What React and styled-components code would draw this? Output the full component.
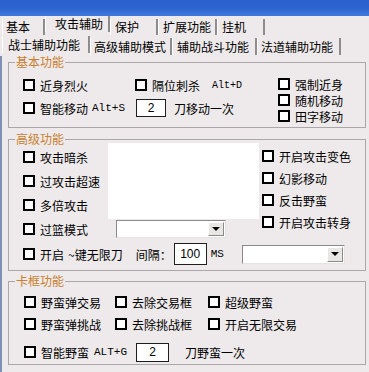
import React from "react";
import styled, { createGlobalStyle } from "styled-components";

const GlobalStyle = createGlobalStyle`
  html, body {
    margin: 0;
    padding: 0;
    background: #eeeaeb;
  }
  body {
    font-family: "Noto Sans CJK SC", "Noto Sans", sans-serif;
    font-size: 12px;
    color: #000;
  }
`;

const Window = styled.div`
  display: flex;
  flex-direction: column;
  width: 369px;
  height: 372px;
  overflow: hidden;
  background: #eeeaeb;
`;

const TitleBar = styled.header`
  flex: none;
  height: 16px;
  background: #2d63cf linear-gradient(180deg, #2a5fcf 0%, #2d63d0 50%, #4079df 100%);
`;

const TabRow = styled.div`
  display: flex;
  flex: none;
  align-items: flex-start;
  height: 20px;
  padding-left: 2px;
`;

const Tab = styled.div`
  box-sizing: border-box;
  width: ${({ $w }) => $w}px;
  padding-left: ${({ $pl }) => $pl}px;
  margin-top: ${({ $active, $drop }) => ($active ? 0 : $drop)}px;
  height: ${({ $h }) => $h}px;
  line-height: ${({ $h }) => $h}px;
  border-left: 1px solid #fff;
  border-right: 2px solid #8e8c8d;
  white-space: nowrap;
  background: #eeeaeb;
`;

const Panel = styled.div`
  flex: none;
  border-left: 2px solid #7e8fb6;
  height: 316px;
  padding-left: 4px;
`;

const Group = styled.fieldset`
  box-sizing: border-box;
  width: 358px;
  margin: ${({ $mt }) => $mt}px 0 0 2px;
  padding: 0;
  border: 1px solid #a9a7a8;
  min-inline-size: 0;
`;

const Legend = styled.legend`
  margin-left: 6px;
  padding: 0 1px;
  line-height: 12px;
  height: 12px;
  color: #c9802f;
`;

const BasicBody = styled.div`
  display: grid;
  grid-template-columns: 112px 143px 1fr;
  grid-template-rows: 22px 22px;
  row-gap: 1px;
  padding: 6px 0 8px 14px;
`;

const SideList = styled.div`
  grid-column: 3;
  grid-row: 1 / 3;
  display: flex;
  flex-direction: column;
  margin-top: 2px;
`;

const Line = styled.div`
  display: flex;
  align-items: center;
  height: ${({ $h }) => $h || 22}px;
  white-space: nowrap;
  grid-column: ${({ $span }) => $span || "auto"};
`;

const Check = styled.label`
  display: flex;
  align-items: center;
  gap: 5px;
  height: ${({ $h }) => $h || 22}px;
  white-space: nowrap;
  flex: none;
`;

const Box = styled.span`
  box-sizing: border-box;
  width: 12px;
  height: 12px;
  border: 2px solid #000;
  background: #fff;
  flex: none;
`;

const Text = styled.span`
  margin-left: ${({ $ml }) => $ml || 0}px;
`;

const Key = styled.span`
  font-family: "Liberation Mono", monospace;
  font-size: ${({ $size }) => $size || 11}px;
  margin-left: ${({ $ml }) => $ml || 0}px;
`;

const NumBox = styled.div`
  box-sizing: border-box;
  width: ${({ $w }) => $w}px;
  height: ${({ $h }) => $h}px;
  margin-left: ${({ $ml }) => $ml || 0}px;
  border: 1px solid #1e1e1e;
  background: #fff;
  display: flex;
  align-items: center;
  justify-content: center;
  font-family: "Liberation Sans", sans-serif;
  font-size: 12px;
  flex: none;
`;

const Combo = styled.div`
  box-sizing: border-box;
  width: ${({ $w }) => $w}px;
  height: ${({ $h }) => $h}px;
  margin-left: ${({ $ml }) => $ml || 0}px;
  margin-top: ${({ $mt }) => $mt || 0}px;
  background: #fff;
  border-top: 1px solid #8a8a8a;
  border-left: 1px solid #8a8a8a;
  border-right: 1px solid #e4e4e4;
  border-bottom: 1px solid #e4e4e4;
  display: flex;
  justify-content: flex-end;
  padding: 1px;
  flex: none;
`;

const DropBtn = styled.span`
  box-sizing: border-box;
  width: 16px;
  background: #e9e7e6;
  border: 1px solid;
  border-color: #fff #8a8a8a #8a8a8a #fff;
  display: flex;
  align-items: center;
  justify-content: center;

  &::after {
    content: "";
    border-left: 4px solid transparent;
    border-right: 4px solid transparent;
    border-top: 4px solid #000;
  }
`;

const AdvBody = styled.div`
  padding: 0 0 5px 0;
`;

const AdvGrid = styled.div`
  display: grid;
  grid-template-columns: 99px 151px 1fr;
  grid-template-rows: 74px 19px;
`;

const LeftList = styled.div`
  grid-column: 1;
  grid-row: 1 / 3;
  display: flex;
  flex-direction: column;
  gap: 2px;
  padding: 1px 0 0 14px;
`;

const ListBox = styled.div`
  grid-column: 2;
  grid-row: 1;
  background: #fff;
  margin-top: -2px;
`;

const ComboCell = styled.div`
  grid-column: 2;
  grid-row: 2;
`;

const RightList = styled.div`
  grid-column: 3;
  grid-row: 1 / 3;
  display: flex;
  flex-direction: column;
  padding-left: 3px;
`;

const BottomRow = styled.div`
  display: flex;
  align-items: center;
  height: 22px;
  margin-top: 5px;
  padding-left: 14px;
  white-space: nowrap;
`;

const CardBody = styled.div`
  display: grid;
  grid-template-columns: 91px 93px 1fr;
  grid-template-rows: 22px 22px 22px;
  padding: 4px 0 7px 15px;
`;

const LastRow = styled(Line)`
  grid-column: 1 / 4;
  margin-top: 6px;
`;

const Item = ({ label, h }) => (
  <Check $h={h}>
    <Box />
    <span>{label}</span>
  </Check>
);

const topTabs = [
  { label: "基本", w: 43, pl: 3 },
  { label: "攻击辅助", w: 65, pl: 9, active: true },
  { label: "保护", w: 48, pl: 4 },
  { label: "扩展功能", w: 59, pl: 4 },
  { label: "挂机", w: 48, pl: 4 },
];

const subTabs = [
  { label: "战士辅助功能", w: 88, pl: 5, active: true },
  { label: "高级辅助模式", w: 82, pl: 3 },
  { label: "辅助战斗功能", w: 85, pl: 4 },
  { label: "法道辅助功能", w: 84, pl: 3 },
];

export default function App() {
  return (
    <>
      <GlobalStyle />
      <Window>
        <TitleBar />
        <TabRow>
          {topTabs.map((t) => (
            <Tab key={t.label} $w={t.w} $pl={t.pl} $active={t.active} $drop={3} $h={16}>
              {t.label}
            </Tab>
          ))}
        </TabRow>
        <TabRow>
          {subTabs.map((t) => (
            <Tab key={t.label} $w={t.w} $pl={t.pl} $active={t.active} $drop={2} $h={17}>
              {t.label}
            </Tab>
          ))}
        </TabRow>
        <Panel>
          <Group $mt={0}>
            <Legend>基本功能</Legend>
            <BasicBody>
              <Item label="近身烈火" />
              <Line>
                <Item label="隔位刺杀" />
                <Key $ml={12} $size={10}>Alt+D</Key>
              </Line>
              <SideList>
                <Item label="强制近身" h={16} />
                <Item label="随机移动" h={16} />
                <Item label="田字移动" h={16} />
              </SideList>
              <Line $span="1 / 3">
                <Item label="智能移动" />
                <Key $ml={4}>Alt+S</Key>
                <NumBox $w={30} $h={18} $ml={11}>2</NumBox>
                <Text $ml={8}>刀移动一次</Text>
              </Line>
            </BasicBody>
          </Group>

          <Group $mt={5}>
            <Legend>高级功能</Legend>
            <AdvBody>
              <AdvGrid>
                <LeftList>
                  <Item label="攻击暗杀" />
                  <Item label="过攻击超速" />
                  <Item label="多倍攻击" />
                  <Item label="过篮模式" />
                </LeftList>
                <ListBox />
                <ComboCell>
                  <Combo $w={110} $h={18} $ml={8} $mt={1}>
                    <DropBtn />
                  </Combo>
                </ComboCell>
                <RightList>
                  <Item label="开启攻击变色" />
                  <Item label="幻影移动" />
                  <Item label="反击野蛮" />
                  <Item label="开启攻击转身" />
                </RightList>
              </AdvGrid>
              <BottomRow>
                <Item label="开启" />
                <Text $ml={4}>~键无限刀</Text>
                <Text $ml={13}>间隔：</Text>
                <NumBox $w={33} $h={22} $ml={2}>100</NumBox>
                <Key $ml={4}>MS</Key>
                <Combo $w={103} $h={19} $ml={18}>
                  <DropBtn />
                </Combo>
              </BottomRow>
            </AdvBody>
          </Group>

          <Group $mt={4}>
            <Legend>卡框功能</Legend>
            <CardBody>
              <Item label="野蛮弹交易" />
              <Item label="去除交易框" />
              <Item label="超级野蛮" />
              <Item label="野蛮弹挑战" />
              <Item label="去除挑战框" />
              <Item label="开启无限交易" />
              <LastRow>
                <Item label="智能野蛮" />
                <Key $ml={5}>ALT+G</Key>
                <NumBox $w={33} $h={19} $ml={9}>2</NumBox>
                <Text $ml={16}>刀野蛮一次</Text>
              </LastRow>
            </CardBody>
          </Group>
        </Panel>
      </Window>
    </>
  );
}
